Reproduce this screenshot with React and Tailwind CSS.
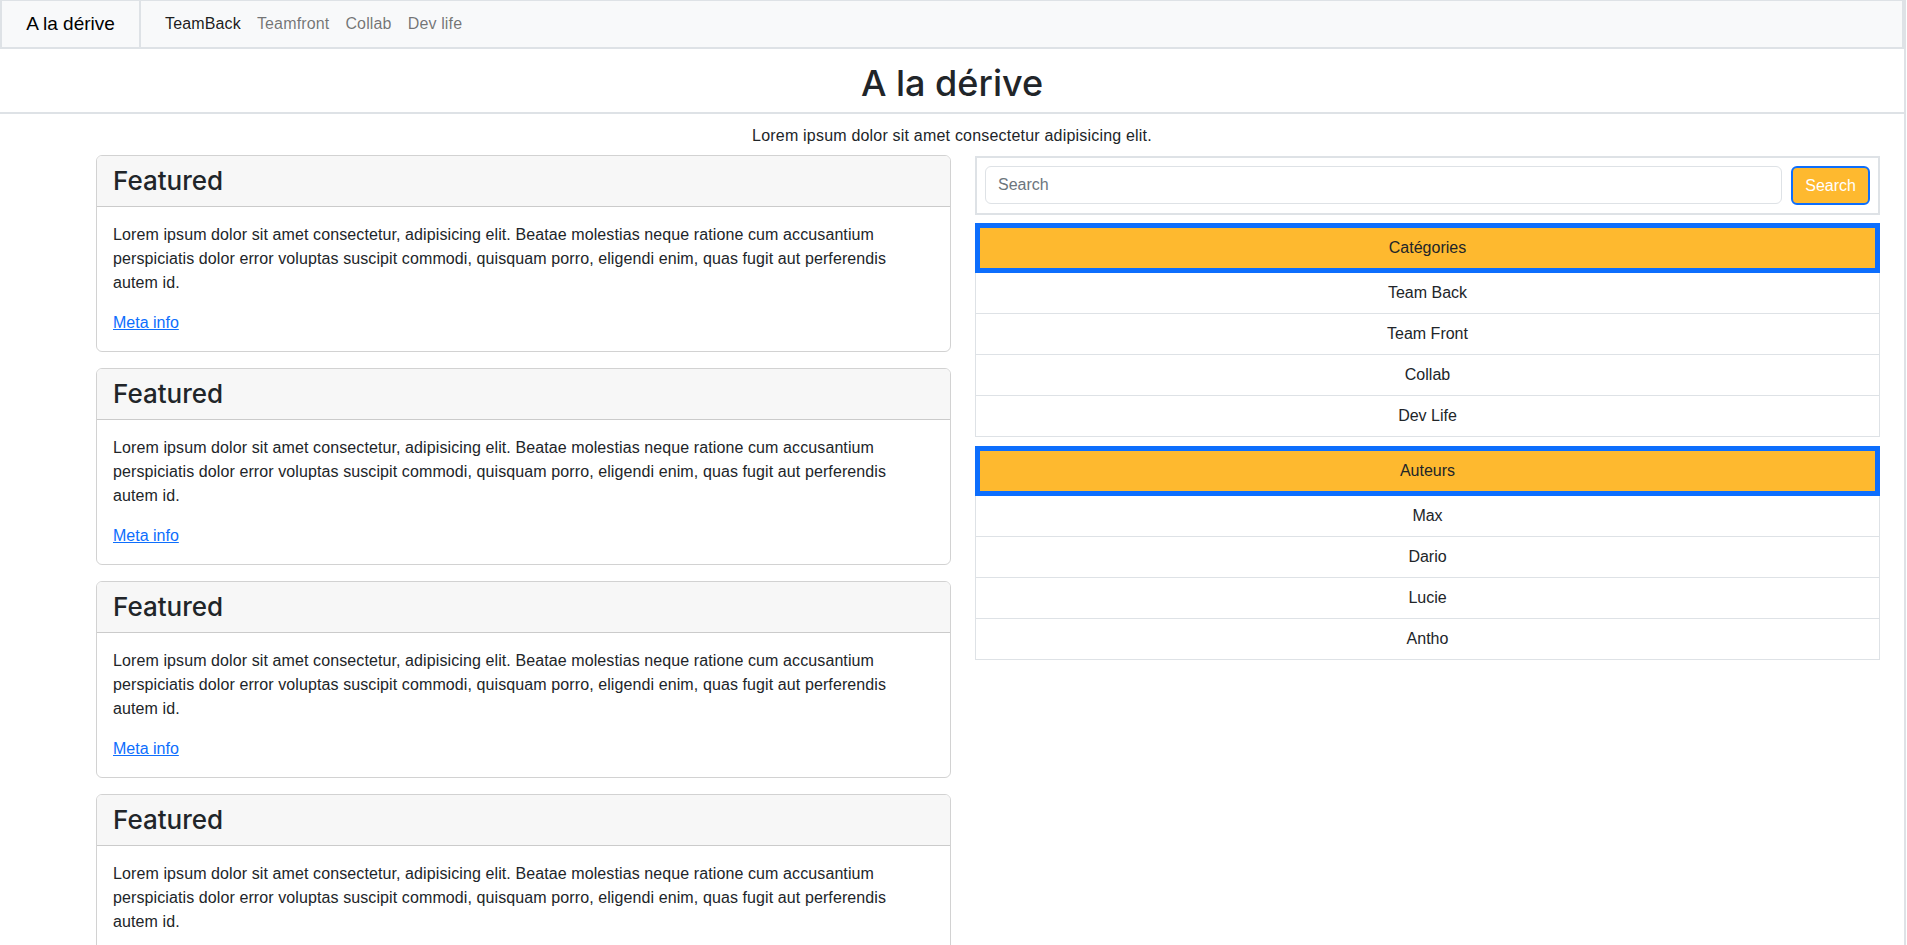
const navLinks = [
  { label: "TeamBack", active: true },
  { label: "Teamfront" },
  { label: "Collab" },
  { label: "Dev life" },
];

const categories = ["Team Back", "Team Front", "Collab", "Dev Life"];
const authors = ["Max", "Dario", "Lucie", "Antho"];

const lorem =
  "Lorem ipsum dolor sit amet consectetur, adipisicing elit. Beatae molestias neque ratione cum accusantium perspiciatis dolor error voluptas suscipit commodi, quisquam porro, eligendi enim, quas fugit aut perferendis autem id.";

function Navbar() {
  return (
    <nav className="h-[49px] flex items-stretch bg-[#f8f9fa] border-x-2 border-b-2 border-t border-[#dee2e6]">
      <div className="w-[139px] flex items-center justify-center border-r-2 border-[#dee2e6] text-[19px] text-black">
        A la dérive
      </div>
      <ul className="flex items-center pl-4">
        {navLinks.map((link) => (
          <li key={link.label}>
            <a
              href="#"
              className={`px-2 text-base tracking-[0.15px] ${link.active ? "text-black/90" : "text-black/55"}`}
            >
              {link.label}
            </a>
          </li>
        ))}
      </ul>
    </nav>
  );
}

function Card() {
  return (
    <div className="border border-black/[0.175] rounded-md overflow-hidden">
      <div className="px-4 py-2 bg-[#f7f7f7] border-b border-black/[0.175]">
        <h3 className="font-['Inter',sans-serif] text-[26px] leading-[34px] font-medium text-[#212529]">
          Featured
        </h3>
      </div>
      <div className="p-4">
        <p className="mb-4 mr-3 tracking-[0.1px]">{lorem}</p>
        <a href="#" className="text-[#0d6efd] underline">
          Meta info
        </a>
      </div>
    </div>
  );
}

function ListBlock({ title, items }) {
  return (
    <div>
      <div className="h-[50px] flex items-center justify-center bg-[#feb92f] border-[5px] border-[#0d6efd] text-[#212529]">
        {title}
      </div>
      <ul>
        {items.map((item) => (
          <li
            key={item}
            className="h-[41px] flex items-center justify-center border-x border-b border-[#dee2e6]"
          >
            {item}
          </li>
        ))}
      </ul>
    </div>
  );
}

export default function App() {
  return (
    <div className="w-[1906px] min-h-screen bg-white border-r-2 border-[#dee2e6] font-['Liberation_Sans',Arial,sans-serif] text-base leading-6 text-[#212529]">
      <Navbar />

      <header className="h-[65px] flex items-center justify-center pt-1 border-b-2 border-[#dee2e6]">
        <h1 className="font-['Inter',sans-serif] text-[36px] leading-[44px] font-medium">A la dérive</h1>
      </header>

      <p className="text-center pt-[10px] pb-[7px] tracking-[0.2px]">
        Lorem ipsum dolor sit amet consectetur adipisicing elit.
      </p>

      <div className="flex items-start gap-6 pl-[96px]">
        <div className="w-[855px] flex flex-col gap-4">
          <Card />
          <Card />
          <Card />
          <Card />
        </div>

        <aside className="w-[905px] flex flex-col gap-2 mt-px">
          <form className="flex gap-[9px] p-2 border-2 border-[#dee2e6]">
            <input
              type="text"
              placeholder="Search"
              className="flex-1 h-[38px] px-3 border border-[#dee2e6] rounded-md placeholder:text-[#6c757d] outline-none"
            />
            <button
              type="button"
              className="h-[39px] px-3 bg-[#feb92f] border-2 border-[#0d6efd] rounded-md text-white"
            >
              Search
            </button>
          </form>

          <ListBlock title="Catégories" items={categories} />
          <div className="pt-px">
            <ListBlock title="Auteurs" items={authors} />
          </div>
        </aside>
      </div>
    </div>
  );
}
